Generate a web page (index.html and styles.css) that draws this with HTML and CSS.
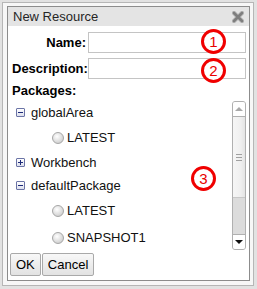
FILE: index.html
```html
<!DOCTYPE html>
<html lang="en">
<head>
    <meta charset="UTF-8">
    <title>New Resource</title>
    <link rel="stylesheet" href="styles.css">
</head>
<body>
    <div class="frame">
        <div class="dialog">
            <div class="title-bar">
                <span class="title">New Resource</span>
                <svg class="close-icon" width="12" height="12" viewBox="0 0 12 12">
                    <path d="M2 2 L10 10 M10 2 L2 10" stroke="#b8b8b8" stroke-width="4.4" stroke-linecap="round"/>
                    <path d="M2 2 L10 10 M10 2 L2 10" stroke="#7e7e7e" stroke-width="2.6" stroke-linecap="round"/>
                </svg>
            </div>
            <form class="form">
                <div class="form-row">
                    <label for="name" class="input-label">Name:</label>
                    <input class="input-field" type="text" id="name">
                </div>
                <div class="form-row">
                    <label for="description" class="input-label">Description:</label>
                    <input class="input-field" type="text" id="description">
                </div>
                <div class="packages-label">Packages:</div>
                <div class="tree-box">
                    <div class="tree">
                        <div class="tree-node"><span class="toggle minus"></span>globalArea</div>
                        <div class="tree-leaf"><span class="radio"></span>LATEST</div>
                        <div class="tree-node"><span class="toggle plus"></span>Workbench</div>
                        <div class="tree-node"><span class="toggle minus"></span>defaultPackage</div>
                        <div class="tree-leaf"><span class="radio"></span>LATEST</div>
                        <div class="tree-leaf"><span class="radio"></span>SNAPSHOT1</div>
                    </div>
                    <div class="scrollbar">
                        <div class="scroll-btn up"></div>
                        <div class="scroll-thumb"><span class="grip"></span></div>
                        <div class="scroll-track"></div>
                        <div class="scroll-btn down"></div>
                    </div>
                </div>
            </form>
            <div class="button-bar">
                <button class="dialog-button" type="button">OK</button>
                <button class="dialog-button" type="button">Cancel</button>
            </div>
        </div>
    </div>

    <!-- annotation markers drawn over the screenshot -->
    <div class="marker marker-1">1</div>
    <div class="marker marker-2">2</div>
    <div class="marker marker-3">3</div>
</body>
</html>
```

FILE: styles.css
```css
body {
    margin: 0;
    background-color: #e2e2e2;
    font-family: "Liberation Sans", Arial, sans-serif;
    font-size: 13px;
    color: #111;
}

.frame {
    width: 252px;
    margin: 2px 0 0 2px;
    box-sizing: border-box;
    border: 1px solid #b6b6b6;
    background-color: #f7f7f7;
    padding: 3px 3px 4px 4px;
}

.dialog {
    border: 1px solid #8c8c8c;
    background-color: #fff;
}

.title-bar {
    height: 19px;
    display: flex;
    align-items: center;
    justify-content: space-between;
    background-color: #e4e4e4;
    padding: 0 5px 0 5px;
}

.title {
    color: #262626;
}

.close-icon {
    display: block;
}

.form {
    padding: 0 3px 0 4px;
}

.form-row {
    display: grid;
    grid-template-columns: 76px minmax(0, 1fr);
    align-items: center;
    margin-top: 6px;
}

.form-row + .form-row {
    margin-top: 5px;
}

.input-label {
    font-weight: bold;
    text-align: right;
    padding-right: 2px;
    color: #000;
}

.input-field {
    width: 100%;
    min-width: 0;
    height: 21px;
    box-sizing: border-box;
    margin: 0;
    border: 1px solid #c4c4c4;
    padding: 2px 3px;
    font: inherit;
}

.packages-label {
    font-weight: bold;
    line-height: 15px;
    margin-top: 4px;
    color: #000;
}

.tree-box {
    display: flex;
    height: 149px;
    margin-top: 3px;
}

.tree {
    flex: 1;
    overflow: hidden;
}

.tree-node {
    height: 23px;
    display: flex;
    align-items: center;
    padding-left: 4px;
}

.tree-leaf {
    height: 27px;
    display: flex;
    align-items: center;
    padding-left: 40px;
}

.toggle {
    position: relative;
    width: 9px;
    height: 9px;
    box-sizing: border-box;
    border: 1px solid #6b74a6;
    border-radius: 1px;
    background: linear-gradient(#ffffff, #dde0ee);
    margin-right: 6px;
}

.toggle::before,
.plus::after {
    content: "";
    position: absolute;
    background-color: #1d2a7a;
}

.toggle::before {
    left: 1px;
    top: 3px;
    width: 5px;
    height: 1px;
}

.plus::after {
    left: 3px;
    top: 1px;
    width: 1px;
    height: 5px;
}

.radio {
    width: 12px;
    height: 12px;
    box-sizing: border-box;
    border: 1px solid #a6a6a6;
    border-radius: 50%;
    background: radial-gradient(circle at 40% 35%, #ffffff, #d4d4d4 70%, #bcbcbc);
    margin-right: 3px;
}

.scrollbar {
    width: 14px;
    display: flex;
    flex-direction: column;
    box-sizing: border-box;
    border: 1px solid #b0b0b0;
    border-radius: 3px;
    overflow: hidden;
    background-color: #dcdcdc;
}

.scroll-btn {
    height: 14px;
    background-color: #fff;
    display: flex;
    align-items: center;
    justify-content: center;
}

.scroll-btn.up {
    border-bottom: 1px solid #b0b0b0;
}

.scroll-btn.down {
    border-top: 1px solid #b0b0b0;
}

.scroll-btn.up::before {
    content: "";
    border: 4px solid transparent;
    border-top: 0;
    border-bottom: 4px solid #a8a8a8;
}

.scroll-btn.down::before {
    content: "";
    border: 4px solid transparent;
    border-bottom: 0;
    border-top: 4px solid #111;
}

.scroll-thumb {
    height: 80px;
    background: linear-gradient(90deg, #f6f6f6, #f0f0f0 60%, #e4e4e4);
    border-bottom: 1px solid #c8c8c8;
    display: flex;
    align-items: center;
    justify-content: center;
}

.grip {
    width: 6px;
    height: 5px;
    border-top: 1px solid #a0a0a0;
    border-bottom: 1px solid #a0a0a0;
    background: linear-gradient(transparent 2px, #a0a0a0 2px, #a0a0a0 3px, transparent 3px);
}

.scroll-track {
    flex: 1;
}

.button-bar {
    display: flex;
    gap: 1px;
    padding: 3px 2px 4px 2px;
}

.dialog-button {
    height: 23px;
    margin: 0;
    padding: 0 5px;
    border: 1px solid #a9a9a9;
    border-radius: 2px;
    background: linear-gradient(#f8f8f8, #e2e2e2);
    font: inherit;
    color: #000;
    white-space: nowrap;
}

.marker {
    position: absolute;
    width: 25px;
    height: 25px;
    box-sizing: border-box;
    border: 3px solid #f00000;
    border-radius: 50%;
    background-color: #fff;
    color: #e80000;
    font-size: 15px;
    line-height: 19px;
    text-align: center;
}

.marker-1 {
    left: 201px;
    top: 29px;
}

.marker-2 {
    left: 201px;
    top: 58px;
}

.marker-3 {
    left: 191px;
    top: 166px;
}
```
